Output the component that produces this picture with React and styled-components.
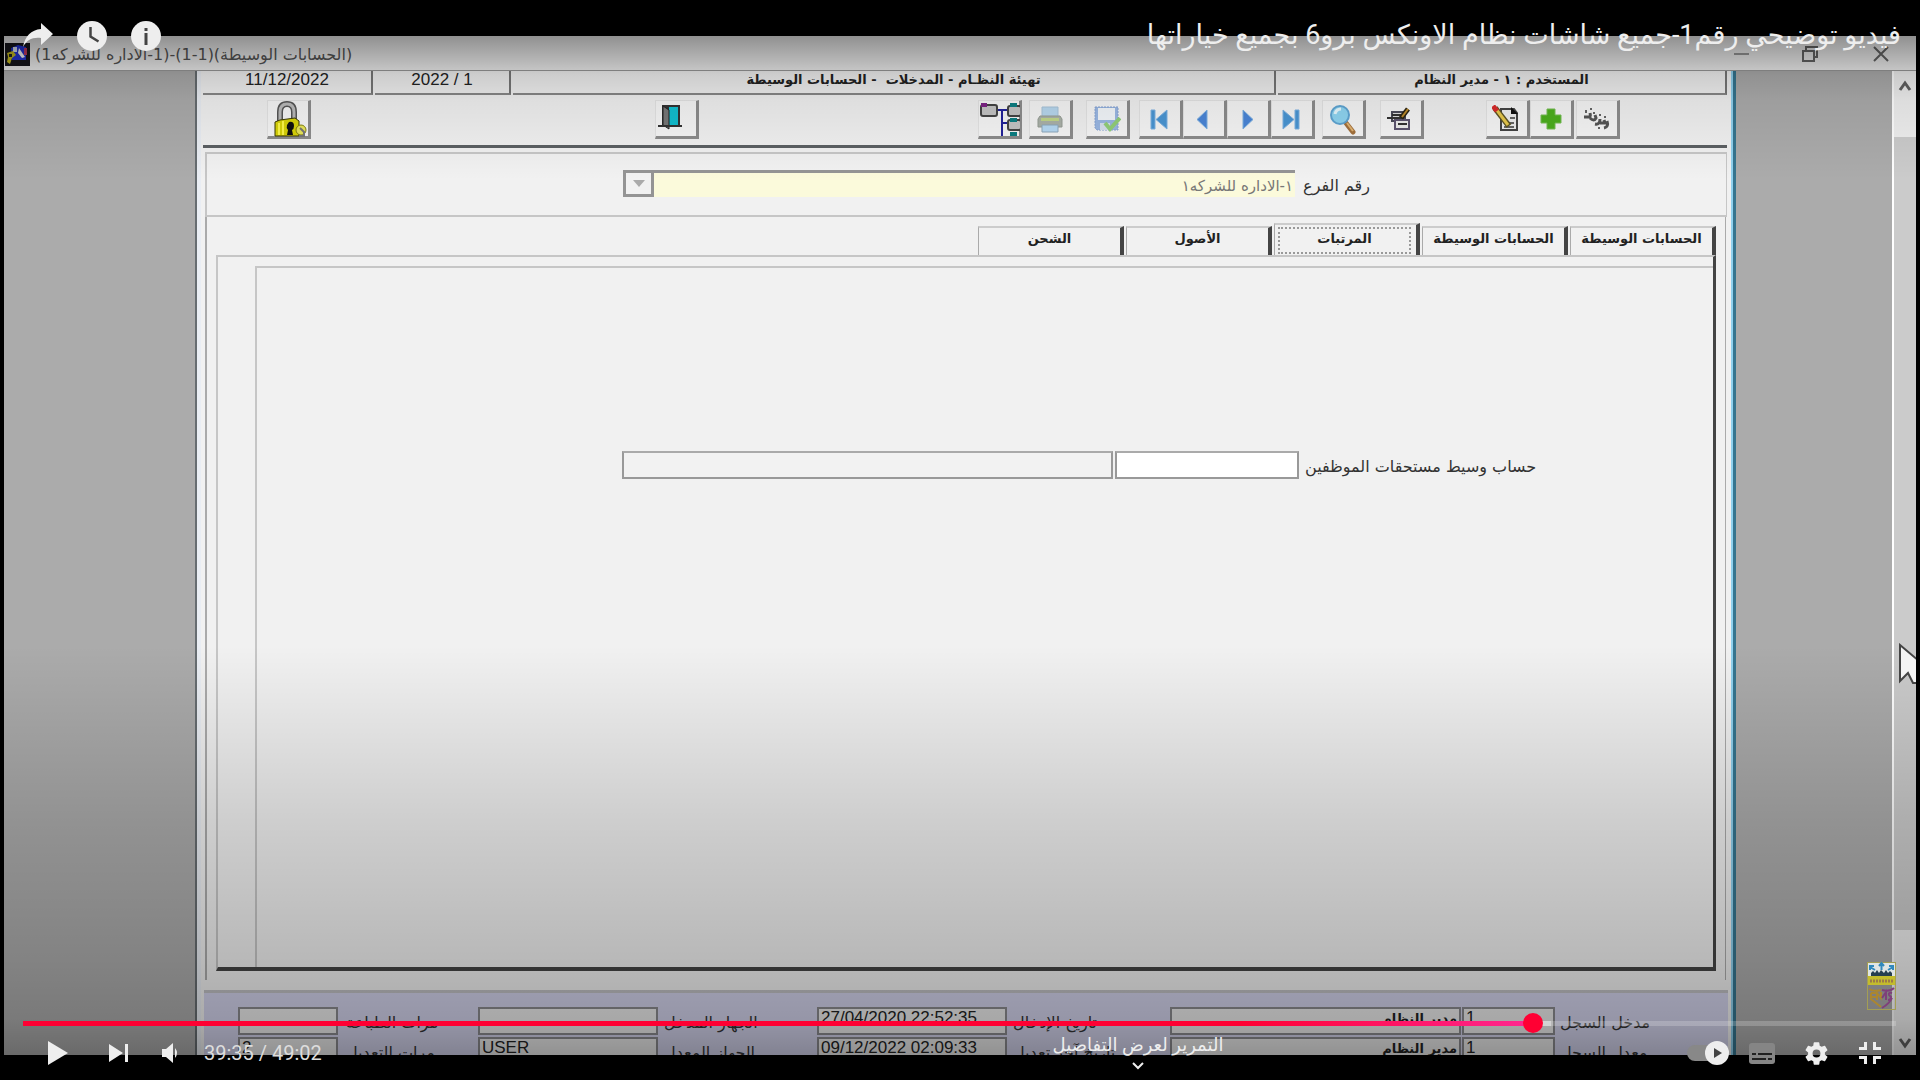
import React from "react";
import styled, { createGlobalStyle, css } from "styled-components";

const Global = createGlobalStyle`
  * { box-sizing: border-box; }
  html, body { margin: 0; padding: 0; background: #000; }
  button, input, select { font: inherit; color: inherit; }
  button { padding: 0; border: 0; background: none; cursor: pointer; }
`;

const Player = styled.main`
  position: relative;
  height: 100vh;
  overflow: hidden;
  display: flex;
  padding: 36px 4px 25px;
  background: #000;
  font-family: "DejaVu Sans", "Liberation Sans", sans-serif;
`;

/* ---------- recorded desktop ---------- */

const Desktop = styled.section`
  flex: 1;
  min-width: 0;
  display: flex;
  flex-direction: column;
  overflow: hidden;
  background: #ababab;
  color: #222;
`;

const TitleBar = styled.header`
  flex: none;
  height: 35px;
  display: flex;
  align-items: center;
  gap: 5px;
  padding: 3px 24px 0 1px;
  background: #f0f0f0;
  border-bottom: 1px solid #999;
`;

const WindowTitle = styled.h1`
  margin: 0;
  flex: 1;
  font-size: 16px;
  line-height: 24px;
  font-weight: 400;
  color: #555;
  white-space: nowrap;
  text-align: left;
`;

const WindowButtons = styled.div`
  display: flex;
  gap: 50px;
  button { width: 20px; height: 20px; }
  svg { display: block; }
`;

const Workspace = styled.div`
  flex: 1;
  min-height: 0;
  display: flex;
`;

const Form = styled.div`
  flex: 1;
  min-width: 0;
  display: flex;
  flex-direction: column;
  margin: 0 156px 0 191px;
  padding-left: 6px;
  padding-right: 6px;
  background: #f1f1f1;
  border-left: 2px solid #666c70;
  border-right: 3px solid #35758f;
  box-shadow: inset 4px 0 #e9edf3, inset -2px 0 #8fd0ee;
`;

const InfoRow = styled.div`
  flex: none;
  display: flex;
  gap: 2px;
  height: 24px;
`;

const InfoCell = styled.div`
  flex: ${(p) => p.$flex};
  height: 24px;
  overflow: hidden;
  text-align: center;
  white-space: pre;
  font-size: ${(p) => (p.$bold ? 13 : 17)}px;
  line-height: 17px;
  font-weight: ${(p) => (p.$bold ? 700 : 400)};
  font-family: ${(p) => (p.$bold ? '"DejaVu Sans", sans-serif' : '"Liberation Sans", sans-serif')};
  border-right: 2px solid #777;
  border-bottom: 2px solid #888;
`;

const Toolbar = styled.div`
  flex: none;
  height: 53px;
  display: flex;
  align-items: flex-start;
  padding: 5px 107px 0 64px;
  border-bottom: 3px solid #5c6063;
`;

const Spacer = styled.div`
  flex: ${(p) => p.$grow} 1 0;
`;

const Group = styled.div`
  display: flex;
  margin-left: ${(p) => p.$gap || 0}px;
`;

const ToolButton = styled.button`
  width: 44px;
  height: 39px;
  display: grid;
  place-items: center;
  background: #f6f6f6;
  border: solid;
  border-width: 1px 3px 3px 1px;
  border-color: #e4e4e4 #8d8d8d #8d8d8d #e4e4e4;
  svg { display: block; }
`;

const BranchBar = styled.div`
  flex: none;
  margin: 4px 0 0 2px;
  height: 65px;
  display: flex;
  align-items: center;
  padding-right: 356px;
  padding-bottom: 3px;
  border: solid #c6c6c6;
  border-width: 2px 1px 2px 2px;
  label { padding-top: 6px; }
`;

const FieldLabel = styled.label`
  direction: rtl;
  text-align: left;
  flex: ${(p) => p.$width ? `0 0 ${p.$width}px` : "none"};
  font-size: 16px;
  line-height: 20px;
  color: #333;
  white-space: nowrap;
`;

const Combo = styled.div`
  flex: 1;
  margin-left: 416px;
  margin-right: 8px;
  height: 27px;
  display: flex;
  background: #fbfadb;
  border: solid #949494;
  border-width: 3px 0 0 3px;
  select {
    flex: 1;
    min-width: 0;
    appearance: none;
    border: 0;
    padding: 2px 2px 0;
    background: transparent;
    direction: rtl;
    font-size: 15px;
    color: #777;
  }
`;

const ComboArrow = styled.span`
  width: 28px;
  display: grid;
  place-items: center;
  background: #f1f1f1;
  border: solid #949494;
  border-width: 0 3px 3px 0;
`;

const TabArea = styled.div`
  flex: 1;
  min-height: 0;
  display: flex;
  flex-direction: column;
  margin: 0 1px 10px 2px;
  padding: 6px 9px 9px 9px;
  border: solid #aaa;
  border-width: 0 1px 0 2px;
`;

const Tabs = styled.div`
  flex: none;
  direction: rtl;
  display: flex;
  align-items: flex-end;
  gap: 2px;
  height: 32px;
`;

const Tab = styled.button`
  width: 146px;
  height: 29px;
  padding-bottom: 6px;
  font-size: 13px;
  line-height: 20px;
  font-weight: 700;
  white-space: nowrap;
  color: #222;
  border: solid;
  border-width: 2px 4px 0 1px;
  border-color: #ccc #444 #ccc #aaa;
  ${(p) => p.$active && css`
    height: 32px;
    padding: 2px 1px;
    span {
      display: block;
      height: 27px;
      line-height: 19px;
      margin: 0 4px 0 2px;
      border: 2px dotted #999;
    }
  `}
`;

const TabPanel = styled.div`
  flex: 1;
  min-height: 0;
  display: flex;
  padding: 9px 0 0 37px;
  border: solid;
  border-width: 2px 3px 4px 2px;
  border-color: #c6c6c6 #444 #444 #c6c6c6;
`;

const PanelInner = styled.div`
  flex: 1;
  padding: 183px 172px 0 365px;
  border: solid #c6c6c6;
  border-width: 2px 0 0 2px;
`;

const AccountRow = styled.div`
  display: flex;
  align-items: center;
  gap: 2px;
  label { margin-left: 4px; padding-top: 4px; }
`;

const AccountInput = styled.input`
  height: 28px;
  min-width: 0;
  flex: ${(p) => p.$flex};
  background: ${(p) => (p.$filled ? "#fff" : "#f2f2f2")};
  border: 2px solid #999;
  border-top-color: #aaa;
`;

const AuditBar = styled.footer`
  flex: none;
  height: 65px;
  overflow: hidden;
  margin: 0 -1px 0 1px;
  padding: 14px 72px 0 34px;
  border-top: 3px solid #c0c0c4;
  background: #d3d3ec;
  display: flex;
  flex-direction: column;
  gap: 2px;
`;

const AuditRow = styled.div`
  flex: none;
  display: flex;
  align-items: flex-start;
  height: 28px;
  label { padding-top: 6px; }
`;

const AuditInput = styled.input`
  height: 28px;
  min-width: 0;
  flex: ${(p) => p.$flex};
  margin-right: ${(p) => p.$after || 0}px;
  padding: 0 2px 6px;
  direction: ${(p) => (p.$rtl ? "rtl" : "ltr")};
  font-family: ${(p) => (p.$rtl ? '"DejaVu Sans", sans-serif' : '"Liberation Sans", sans-serif')};
  font-size: ${(p) => (p.$rtl ? 13 : 17)}px;
  font-weight: ${(p) => (p.$rtl ? 700 : 400)};
  background: #ececec;
  border: 2px solid #8a8a8e;
`;

const ScrollTrack = styled.div`
  flex: none;
  width: 24px;
  display: flex;
  flex-direction: column;
  align-items: center;
  padding: 9px 0 6px;
  background: #efefef;
  border-left: 2px solid #fff;
  gap: 9px;
`;

const ScrollThumb = styled.div`
  align-self: stretch;
  flex: 1;
  margin: 36px 0 98px;
  background: #cbcbcb;
`;

const Pointer = styled.svg`
  position: absolute;
  top: 643px;
  right: 4px;
`;

/* ---------- player overlay ---------- */

const Shade = styled.div`
  position: absolute;
  inset: 0;
  pointer-events: none;
  background:
    linear-gradient(to bottom, rgba(0,0,0,.5) 0, rgba(0,0,0,.4) 36px, rgba(0,0,0,.15) 75px, rgba(0,0,0,.08) 100px, rgba(0,0,0,0) 180px),
    linear-gradient(to top, rgba(0,0,0,.45) 0, rgba(0,0,0,.38) 26px, rgba(0,0,0,.29) 60px, rgba(0,0,0,.235) 120px, rgba(0,0,0,.145) 260px, rgba(0,0,0,0) 435px);
`;

const TopBar = styled.div`
  position: absolute;
  inset: 0 0 auto;
  display: flex;
  justify-content: space-between;
  align-items: center;
  height: 70px;
  padding: 0 19px;
  color: #eee;
`;

const TopActions = styled.div`
  display: flex;
  gap: 16px;
  padding-top: 2px;
  button { width: 38px; height: 38px; display: grid; place-items: center; }
`;

const VideoTitle = styled.a`
  direction: rtl;
  font-family: Roboto, "Noto Sans", "DejaVu Sans", sans-serif;
  font-size: 27px;
  line-height: 36px;
  color: #eee;
  text-decoration: none;
  white-space: nowrap;
`;

const Watermark = styled.svg`
  position: absolute;
  right: 24px;
  bottom: 70px;
`;

const Controls = styled.div`
  position: absolute;
  inset: auto 0 0;
  height: 65px;
  padding: 0 24px 0 23px;
  color: #eee;
`;

const Progress = styled.div`
  height: 20px;
  display: flex;
  align-items: center;
  margin-top: -2px;
  input {
    appearance: none;
    width: 100%;
    height: 5px;
    margin: 0;
    background: linear-gradient(to right, #f03 0, #f03 65%, #ff2791 80.7%, rgba(255,255,255,.5) 80.7%, rgba(255,255,255,.5) 81.6%, rgba(255,255,255,.2) 81.6%);
  }
  input::-webkit-slider-thumb {
    appearance: none;
    width: 20px;
    height: 20px;
    border-radius: 50%;
    background: #f03;
  }
`;

const ControlRow = styled.div`
  display: flex;
  align-items: center;
  height: 44px;
  margin-top: -2px;
  padding-left: 11px;
  margin-right: -1px;
  button { height: 44px; display: grid; place-items: center; }
`;

const IconButton = styled.button`
  width: ${(p) => p.$width || 54}px;
`;

const Time = styled.span`
  margin-left: 20px;
  font-family: Roboto, sans-serif;
  font-size: 20px;
  line-height: 24px;
  color: #ddd;
  white-space: nowrap;
`;

const MoreDetails = styled.button`
  position: absolute;
  left: 0;
  right: 0;
  bottom: 9px;
  width: 176px;
  margin: 0 auto;
  transform: translateX(178px);
  color: #eee;
  font-family: Roboto, "Noto Sans", "DejaVu Sans", sans-serif;
  font-size: 18px;
  line-height: 26px;
  white-space: nowrap;
  svg { display: block; margin: 3px auto 0; }
`;

/* ---------- drawings ---------- */

const AppIcon = () => (
  <svg width="25" height="23" viewBox="0 0 25 23">
    <rect width="25" height="23" fill="#16161c" />
    <path d="M6 5l7-3 8 2v13H7z" fill="#2435d8" />
    <path d="M8 4h4v5H8z" fill="#dbe4f5" />
    <path d="M14 5l6 9-3 1-4-5z" fill="#fff" />
    <path d="M19 5h3v7h-3z" fill="#c43a63" />
    <path d="M2 10l6-2 3 4-4 3-2 6-3-2 1-5z" fill="#c8bc20" />
    <path d="M4 11h3v3H4z" fill="#222" />
  </svg>
);

const Lock = () => (
  <svg width="38" height="36" viewBox="0 0 38 36">
    <path d="M11 20V11q0-8 7-8t7 8v7" fill="none" stroke="#555" strokeWidth="6" />
    <path d="M11 20V11q0-8 7-8t7 8v7" fill="none" stroke="#b9b9b9" strokeWidth="3" />
    <path d="M6 21l5-2 15-2 4 3v15H6z" fill="#d9d408" stroke="#3c3a05" />
    <path d="M10 22v12M14 20v14" stroke="#fff94a" strokeWidth="2" />
    <path d="M20 21q5-1 5 4 0 3-2 4l1 5h-6l1-5q-2-2-1-5z" fill="#111" />
    <circle cx="32" cy="29" r="5" fill="#e9e65a" stroke="#85820d" />
    <path d="M31 27l4 4v4h-5" fill="none" stroke="#777" strokeWidth="2" />
  </svg>
);

const Door = () => (
  <svg width="38" height="34" viewBox="0 0 38 34">
    <path d="M5 3h18v21H5z" fill="#333" />
    <path d="M12 5h9v18h-9z" fill="#12bfd0" />
    <path d="M6 4l6 4v19l-6-4z" fill="#777" stroke="#222" />
    <path d="M1 24h24" stroke="#333" strokeWidth="2" />
  </svg>
);

const Tree = () => (
  <svg width="41" height="36" viewBox="0 0 41 36">
    <path d="M17 9h12M23 8v27M23 22h7" stroke="#22229a" strokeWidth="2" fill="none" />
    <rect x="2" y="4" width="16" height="11" rx="2" fill="#c4c4c4" stroke="#444" strokeWidth="2" />
    <path d="M2 2h6v4H2z" fill="#7c2385" />
    <rect x="29" y="5" width="13" height="10" rx="2" fill="#c4c4c4" stroke="#444" strokeWidth="2" />
    <rect x="29" y="19" width="13" height="10" rx="2" fill="#c4c4c4" stroke="#444" strokeWidth="2" />
    <path d="M31 2h7v4h-7zM31 17h7v4h-7zM31 31h7v4h-7z" fill="#0c7f83" />
  </svg>
);

const Printer = () => (
  <svg width="26" height="28" viewBox="0 0 26 28">
    <path d="M5 2h16v11H5z" fill="#b8d8ef" stroke="#a8c4da" />
    <path d="M3 11h20l2 3v8H1v-8z" fill="#abb2a9" stroke="#969d95" />
    <path d="M4 13h18v3H4z" fill="#c2d78b" />
    <path d="M5 20h16v7H5z" fill="#b7daf5" stroke="#8fa9bd" />
  </svg>
);

const Save = () => (
  <svg width="28" height="28" viewBox="0 0 28 28">
    <path d="M2 2h23v23H4l-2-2z" fill="#9bb8e4" stroke="#86a3d4" strokeDasharray="2 1" />
    <path d="M5 3h17v12H5z" fill="#f3f7fb" />
    <path d="M7 18h10v7H7z" fill="#d7e0ee" />
    <path d="M12 18l5 6L27 13" fill="none" stroke="#92cf79" strokeWidth="4" />
  </svg>
);

const Arrow = ({ flip, bar }) => (
  <svg width="24" height="26" viewBox="0 0 24 26">
    <g transform={flip ? "matrix(-1 0 0 1 22 0)" : undefined}>
      <path d={bar ? "M3 4v19l11-9.500z" : "M7 4v19l10-9.500z"} fill={bar ? "#4a96d4" : "#4a86d8"} stroke="#7eb3e4" />
      {bar && <path d="M15 4h4v19h-4z" fill="#4a96d4" stroke="#7eb3e4" />}
    </g>
  </svg>
);

const Magnifier = () => (
  <svg width="30" height="32" viewBox="0 0 30 32">
    <path d="M18 20l7 9" stroke="#a4713c" strokeWidth="5" strokeLinecap="round" />
    <path d="M19 20l6 8" stroke="#e2b573" strokeWidth="2" />
    <circle cx="12" cy="12" r="9" fill="#8fd5f2" stroke="#5fa5d3" strokeWidth="2" />
    <path d="M7 11q1-5 6-5" stroke="#e6f8ff" strokeWidth="3" fill="none" />
  </svg>
);

const FormEdit = () => (
  <svg width="28" height="26" viewBox="0 0 28 26">
    <path d="M5 6h13v9H5z" fill="#ddd" stroke="#4b4b5a" strokeWidth="2" />
    <path d="M8 14h14v9H8z" fill="#eee" stroke="#5d5570" strokeWidth="2" />
    <path d="M0 12h17M5 9h12M11 18h9" stroke="#333" strokeWidth="2" />
    <path d="M14 12l7-9" stroke="#2b2412" strokeWidth="5" />
    <path d="M15 11l6-8" stroke="#bd8a2a" strokeWidth="2" />
  </svg>
);

const PageEdit = () => (
  <svg width="30" height="28" viewBox="0 0 30 28">
    <path d="M9 4h13l3 4v17H9z" fill="#eee" stroke="#444" strokeWidth="2" />
    <path d="M19 2v7h7z" fill="#111" />
    <path d="M12 22h10M14 18h8M18 13h5" stroke="#666" strokeWidth="2" />
    <path d="M3 3l14 18" stroke="#5c5425" strokeWidth="6" />
    <path d="M4 4l12 16" stroke="#e8c94b" strokeWidth="3" />
    <path d="M1 1l4 5" stroke="#d92b2b" strokeWidth="5" />
  </svg>
);

const Plus = () => (
  <svg width="24" height="24" viewBox="0 0 24 24">
    <path d="M8 2h8v6h6v8h-6v6H8v-6H2V8h6z" fill="#4caf1e" stroke="#77bf55" />
  </svg>
);

const Clear = () => (
  <svg width="30" height="26" viewBox="0 0 30 26">
    <path d="M2 11h5q2 0 1-4M8 12q4 4 6 0l-1-3M13 18q5 1 5-5M18 17h5l-1-3M22 22q5-1 3-7" fill="none" stroke="#555" strokeWidth="3" />
    <path d="M4 4v3M9 2v2M12 6v2M18 8v2M23 10v2M17 21v2" stroke="#666" strokeWidth="2" />
  </svg>
);

const Caret = ({ up }) => (
  <svg width="14" height="12" viewBox="0 0 14 12">
    <path d={up ? "M2 10l5-7 5 7" : "M2 2l5 7 5-7"} fill="none" stroke="#606060" strokeWidth="3" />
  </svg>
);

const TOOLS = [
  [0, [["شجرة الحسابات", <Tree />]]],
  [7, [["طباعة", <Printer />]]],
  [13, [["حفظ", <Save />]]],
  [9, [["الأول", <Arrow bar flip />], ["السابق", <Arrow flip />], ["التالي", <Arrow />], ["الأخير", <Arrow bar />]]],
  [7, [["بحث", <Magnifier />]]],
  [14, [["استعلام", <FormEdit />]]],
  [62, [["تعديل", <PageEdit />], ["إضافة", <Plus />]]],
  [2, [["مسح", <Clear />]]],
];

const TABS = ["الحسابات الوسيطة", "الحسابات الوسيطة", "المرتبات", "الأصول", "الشحن"];

const AUDIT = [
  { id: "entry", print: "", printLabel: "مرات الطباعة", host: "", hostLabel: "الجهاز المدخل", date: "27/04/2020 22:52:35", dateLabel: "تاريخ الإدخال", userLabel: "مدخل السجل" },
  { id: "edit", print: "2", printLabel: "مرات التعديل", host: "USER", hostLabel: "الجهاز المعدل", date: "09/12/2022 02:09:33", dateLabel: "تاريخ آخر تعديل", userLabel: "معدل السجل" },
];

export default function App() {
  return (
    <>
      <Global />
      <Player>
        <Desktop>
          <TitleBar>
            <AppIcon />
            <WindowTitle><bdi dir="rtl">(الحسابات الوسيطة)(1-1)-(1-الاداره للشركه1)</bdi></WindowTitle>
            <WindowButtons>
              <button aria-label="تصغير"><svg width="20" height="20"><path d="M2 9h15" stroke="#999" strokeWidth="2" /></svg></button>
              <button aria-label="استعادة"><svg width="20" height="20"><path d="M1 6h11v10H1zM4 6V2h11v10h-3" fill="none" stroke="#666" strokeWidth="2" /></svg></button>
              <button aria-label="إغلاق"><svg width="20" height="20"><path d="M2 2l14 14M16 2L2 16" stroke="#666" strokeWidth="2" /></svg></button>
            </WindowButtons>
          </TitleBar>
          <Workspace>
            <Form>
              <InfoRow>
                <InfoCell $flex="0 0 170px">11/12/2022</InfoCell>
                <InfoCell $flex="0 0 136px">2022 / 1</InfoCell>
                <InfoCell $flex="1" $bold dir="rtl">تهيئة النظـام - المدخلات  - الحسابات الوسيطة</InfoCell>
                <InfoCell $flex="0 0 449px" $bold dir="rtl">المستخدم : ١ - مدير النظام</InfoCell>
              </InfoRow>
              <Toolbar>
                <ToolButton aria-label="قفل"><Lock /></ToolButton>
                <Spacer $grow={346} />
                <ToolButton aria-label="خروج"><Door /></ToolButton>
                <Spacer $grow={280} />
                {TOOLS.map(([gap, items], i) => (
                  <Group key={i} $gap={gap}>
                    {items.map(([name, icon]) => <ToolButton key={name} aria-label={name}>{icon}</ToolButton>)}
                  </Group>
                ))}
              </Toolbar>
              <BranchBar>
                <Combo>
                  <ComboArrow><svg width="12" height="8"><path d="M0 1h12L6 8z" fill="#aaa" /></svg></ComboArrow>
                  <select id="branch"><option>١-الاداره للشركه١</option></select>
                </Combo>
                <FieldLabel htmlFor="branch" $width={66}>رقم الفرع</FieldLabel>
              </BranchBar>
              <TabArea>
                <Tabs role="tablist">
                  {TABS.map((name, i) => (
                    <Tab key={i} role="tab" aria-selected={i === 2} $active={i === 2}><span>{name}</span></Tab>
                  ))}
                </Tabs>
                <TabPanel>
                  <PanelInner>
                    <AccountRow>
                      <AccountInput $flex="1" aria-label="اسم الحساب" readOnly />
                      <AccountInput $flex="0 0 184px" $filled id="account" />
                      <FieldLabel htmlFor="account" $width={236}>حساب وسيط مستحقات الموظفين</FieldLabel>
                    </AccountRow>
                  </PanelInner>
                </TabPanel>
              </TabArea>
              <AuditBar>
                {AUDIT.map((r) => (
                  <AuditRow key={r.id}>
                    <AuditInput id={r.id + "-print"} $flex="0 0 100px" $after={8} defaultValue={r.print} />
                    <FieldLabel htmlFor={r.id + "-print"} $width={132}>{r.printLabel}</FieldLabel>
                    <AuditInput id={r.id + "-host"} $flex="0 0 180px" $after={6} defaultValue={r.host} />
                    <FieldLabel htmlFor={r.id + "-host"} $width={153}>{r.hostLabel}</FieldLabel>
                    <AuditInput id={r.id + "-date"} $flex="0 0 190px" $after={6} defaultValue={r.date} />
                    <FieldLabel htmlFor={r.id + "-date"} $width={157}>{r.dateLabel}</FieldLabel>
                    <AuditInput aria-label={r.userLabel} $flex="1" $after={1} $rtl defaultValue="مدير النظام" />
                    <AuditInput id={r.id + "-user"} $flex="0 0 93px" $after={5} defaultValue="1" />
                    <FieldLabel htmlFor={r.id + "-user"} $width={96}>{r.userLabel}</FieldLabel>
                  </AuditRow>
                ))}
              </AuditBar>
            </Form>
            <ScrollTrack>
              <Caret up />
              <ScrollThumb />
              <Caret />
            </ScrollTrack>
          </Workspace>
        </Desktop>

        <Shade />
        <Pointer width="17" height="44" viewBox="0 0 17 44">
          <path d="M1 2v36l8-8 5 10h6V18z" fill="#f4f4f4" stroke="#444" strokeWidth="2" />
        </Pointer>

        <TopBar>
          <TopActions>
            <button aria-label="مشاركة"><svg width="32" height="28" viewBox="0 0 32 28" fill="#eee"><path d="M19 1l12 11-12 11v-7C10 15 5 18 1 25 3 14 9 8 19 7z" /></svg></button>
            <button aria-label="المشاهدة لاحقًا"><svg width="30" height="30" viewBox="0 0 30 30"><circle cx="15" cy="15" r="15" fill="#eee" /><path d="M13.500 6v9.500l8 5" fill="none" stroke="#444" strokeWidth="2.500" /></svg></button>
            <button aria-label="معلومات"><svg width="30" height="30" viewBox="0 0 30 30"><circle cx="15" cy="15" r="15" fill="#eee" /><path d="M13.500 7h3v3h-3zM13.500 12h3v12h-3z" fill="#444" /></svg></button>
          </TopActions>
          <VideoTitle href="#">فيديو توضيحي رقم1-جميع شاشات نظام الاونكس برو6 بجميع خياراتها</VideoTitle>
        </TopBar>

        <Watermark width="29" height="48" viewBox="0 0 29 48">
          <rect width="29" height="14" fill="#dfe5e5" />
          <rect y="14" width="29" height="9" fill="#c4bc2c" />
          <rect x=".5" y=".5" width="28" height="47" fill="none" stroke="#a39e55" />
          <path d="M14.500 2v6M3 5l5 3M26 5l-5 3M12 4l2.500-3L17 4M3 8V4h4M26 8V4h-4" fill="none" stroke="#3189bd" strokeWidth="2" />
          <path d="M4 14v-3l2-2 2 2 2-3 2 3 2-3 3 3 2-3 2 3 2-2 2 2v3z" fill="#263e50" />
          <path d="M3 19h23" stroke="#9c7a48" strokeWidth="3" strokeDasharray="2 1" />
          <path d="M2 27q5 3 12 1M4 31h6M4 35h5M4 31v6l10 8M10 38v-7l4 5V30" fill="none" stroke="#ab862f" strokeWidth="2" />
          <path d="M27 26q-4 4-12 2M15 36l4-6v8M25 31q-4-1-3 2l2 2q0 3-3 3M25 36q-2 5-10 10" fill="none" stroke="#7f3f7b" strokeWidth="2" />
        </Watermark>

        <Controls>
          <Progress><input type="range" min="0" max="2942" defaultValue="2382" aria-label="شريط التقدم" /></Progress>
          <ControlRow>
            <IconButton $width={48} aria-label="تشغيل"><svg width="22" height="26"><path d="M1 1l20 12L1 25z" fill="#eee" /></svg></IconButton>
            <IconButton $width={74} aria-label="التالي"><svg width="20" height="18"><path d="M0 0l14 9-14 9zM16 0h3v18h-3z" fill="#eee" /></svg></IconButton>
            <IconButton $width={28} aria-label="كتم الصوت"><svg width="18" height="20"><path d="M1 6h4l7-6v20l-7-6H1zM14 5q4 5 0 10z" fill="#eee" /></svg></IconButton>
            <Time>39:35 / 49:02</Time>
            <Spacer $grow={1} />
            <IconButton aria-label="التشغيل التلقائي"><svg width="42" height="24"><rect x="0" y="4" width="36" height="16" rx="8" fill="#888" /><circle cx="30" cy="12" r="12" fill="#eee" /><path d="M27 7l8 5-8 5z" fill="#444" /></svg></IconButton>
            <IconButton aria-label="الترجمة"><svg width="26" height="21"><rect width="26" height="21" rx="3" fill="#858585" /><path d="M3 11h4M9 11h14M3 16h14M19 16h4" stroke="#222" strokeWidth="2" /></svg></IconButton>
            <IconButton aria-label="الإعدادات"><svg width="27" height="27" viewBox="0 0 24 24"><path fill="#eee" d="M19.430 12.980c.04-.32.07-.64.07-.98s-.03-.66-.07-.98l2.110-1.650a.5.5 0 0 0 .12-.64l-2-3.460a.5.5 0 0 0-.61-.22l-2.490 1a7.300 7.300 0 0 0-1.690-.98l-.38-2.650A.49.49 0 0 0 14 2h-4a.49.49 0 0 0-.49.42l-.38 2.650c-.61.25-1.170.59-1.690.98l-2.490-1a.5.5 0 0 0-.61.22l-2 3.460a.5.5 0 0 0 .12.64l2.110 1.650a7.900 7.900 0 0 0 0 1.960l-2.110 1.650a.5.5 0 0 0-.12.64l2 3.460c.12.22.39.3.61.22l2.490-1c.52.4 1.080.73 1.690.98l.38 2.650c.03.24.24.42.49.42h4c.25 0 .46-.18.49-.42l.38-2.650c.61-.25 1.170-.59 1.690-.98l2.490 1c.23.09.49 0 .61-.22l2-3.460a.5.5 0 0 0-.12-.64zM12 15.500a3.500 3.500 0 1 1 0-7 3.500 3.500 0 0 1 0 7z" /></svg></IconButton>
            <IconButton aria-label="إنهاء وضع ملء الشاشة"><svg width="24" height="24"><path d="M7.500 1v6.500H1M16.500 1v6.500H23M7.500 23v-6.500H1M16.500 23v-6.500H23" fill="none" stroke="#eee" strokeWidth="3" /></svg></IconButton>
          </ControlRow>
        </Controls>
        <MoreDetails dir="rtl">
          التمرير لعرض التفاصيل
          <svg width="14" height="10"><path d="M2 2l5 5 5-5" fill="none" stroke="#eee" strokeWidth="2" /></svg>
        </MoreDetails>
      </Player>
    </>
  );
}
